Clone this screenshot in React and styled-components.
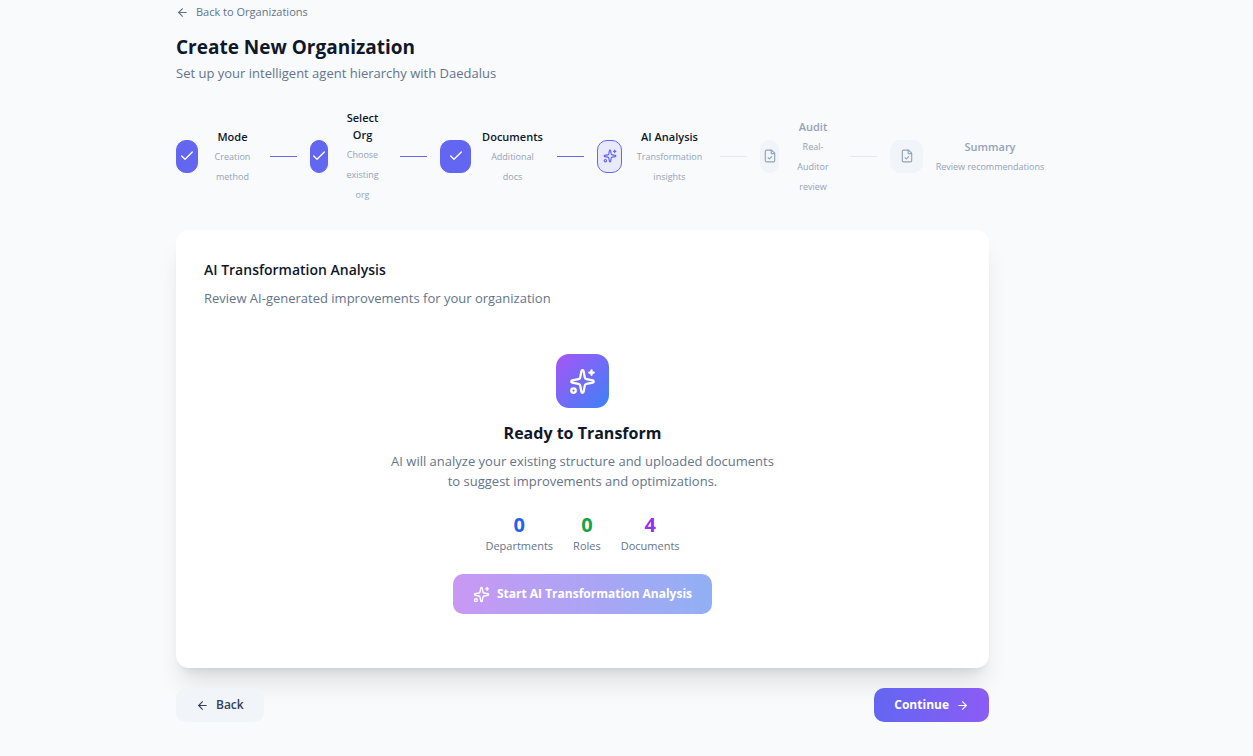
import styled, { createGlobalStyle } from "styled-components";
import { ArrowLeft, ArrowRight, Check, FileCheck, Sparkles } from "lucide-react";

const steps = [
  { title: "Mode", text: "Creation method", status: "done", badge: 22, label: 49 },
  { title: "Select Org", text: "Choose existing org", status: "done", badge: 18, label: 49 },
  { title: "Documents", text: "Additional docs", status: "done", badge: 31, label: 63 },
  { title: "AI Analysis", text: "Transformation insights", status: "current", badge: 25, label: 75 },
  { title: "Audit", text: "Real-Auditor review", status: "next", badge: 19, label: 48 },
  { title: "Summary", text: "Review recommendations", status: "next", badge: 33, label: 114 },
];

const stats = [
  { value: 0, label: "Departments", color: "#2563eb" },
  { value: 0, label: "Roles", color: "#16a34a" },
  { value: 4, label: "Documents", color: "#9333ea" },
];

function StepIcon({ status }) {
  if (status === "done") return <Check size={16} />;
  if (status === "current") return <Sparkles size={14} />;
  return <FileCheck size={14} />;
}

export default function App() {
  return (
    <Page>
      <GlobalStyle />
      <Content>
        <BackLink href="#organizations">
          <ArrowLeft size={13} />
          Back to Organizations
        </BackLink>
        <Title>Create New Organization</Title>
        <Subtitle>Set up your intelligent agent hierarchy with Daedalus</Subtitle>

        <Steps>
          {steps.map((s) => (
            <Step key={s.title} $done={s.status === "done"}>
              <Badge $status={s.status} $width={s.badge}>
                <StepIcon status={s.status} />
              </Badge>
              <StepLabel $width={s.label}>
                <StepTitle $muted={s.status === "next"}>{s.title}</StepTitle>
                <StepText>{s.text}</StepText>
              </StepLabel>
            </Step>
          ))}
        </Steps>

        <Card>
          <CardTitle>AI Transformation Analysis</CardTitle>
          <CardText>Review AI-generated improvements for your organization</CardText>
          <Hero>
            <HeroIcon>
              <Sparkles size={27} />
            </HeroIcon>
            <HeroTitle>Ready to Transform</HeroTitle>
            <HeroText>
              AI will analyze your existing structure and uploaded documents to suggest
              improvements and optimizations.
            </HeroText>
            <Stats>
              {stats.map((s) => (
                <div key={s.label}>
                  <StatValue $color={s.color}>{s.value}</StatValue>
                  <StatLabel>{s.label}</StatLabel>
                </div>
              ))}
            </Stats>
            <StartButton type="button" disabled>
              <Sparkles size={17} />
              Start AI Transformation Analysis
            </StartButton>
          </Hero>
        </Card>

        <Footer>
          <BackButton type="button">
            <ArrowLeft size={13} />
            Back
          </BackButton>
          <ContinueButton type="button">
            Continue
            <ArrowRight size={13} />
          </ContinueButton>
        </Footer>
      </Content>
    </Page>
  );
}

const GlobalStyle = createGlobalStyle`
  * {
    box-sizing: border-box;
  }
  body {
    margin: 0;
    background: #f8fafc;
    color: #0f172a;
    font-family: "Segoe UI", "Open Sans", sans-serif;
    font-size: 13px;
    line-height: 20px;
  }
  h1, h2, h3, p, ol {
    margin: 0;
    padding: 0;
  }
  svg {
    flex-shrink: 0;
  }
`;

const Page = styled.div`
  min-height: 100vh;
  padding: 2px 88px 34px 0;
  overflow-x: hidden;
`;

const Content = styled.main`
  max-width: 813px;
  margin: 0 auto;
`;

const BackLink = styled.a`
  display: inline-flex;
  align-items: center;
  gap: 7px;
  vertical-align: top;
  color: #64748b;
  font-size: 11px;
  text-decoration: none;
`;

const Title = styled.h1`
  margin-top: 12px;
  font-size: 19px;
  font-weight: 700;
  line-height: 26px;
`;

const Subtitle = styled.p`
  margin-top: 3px;
  color: #64748b;
`;

const Steps = styled.ol`
  display: flex;
  align-items: center;
  height: 96px;
  margin-top: 25px;
  list-style: none;
`;

const Step = styled.li`
  display: flex;
  align-items: center;
  flex-shrink: 0;

  &:not(:last-child)::after {
    content: "";
    width: 27px;
    height: 1px;
    margin: 0 13px;
    background: ${(p) => (p.$done ? "#6366f1" : "#e2e8f0")};
  }
`;

const badgeColors = {
  done: "background: #6366f1; border-color: #6366f1; color: #ffffff;",
  current: "background: #e9e9fc; border-color: #6366f1; color: #6366f1;",
  next: "background: #f1f5f9; border-color: #f1f5f9; color: #94a3b8;",
};

const Badge = styled.div`
  display: flex;
  align-items: center;
  justify-content: center;
  width: ${(p) => p.$width}px;
  height: 33px;
  border: 1px solid;
  border-radius: 10px;
  ${(p) => badgeColors[p.$status]}
`;

const StepLabel = styled.div`
  width: ${(p) => p.$width}px;
  margin-left: 10px;
  padding: 2px 1px 0;
  text-align: center;
`;

const StepTitle = styled.div`
  color: ${(p) => (p.$muted ? "#94a3b8" : "#0f172a")};
  font-size: 11px;
  font-weight: 600;
  line-height: 17px;
`;

const StepText = styled.div`
  margin-top: 2px;
  color: #94a3b8;
  font-size: 9px;
`;

const Card = styled.section`
  margin-top: 26px;
  padding: 28px 28px 54px;
  border-radius: 13px;
  background: #ffffff;
  box-shadow: 0 20px 25px -5px rgba(0, 0, 0, 0.1), 0 8px 10px -6px rgba(0, 0, 0, 0.1);
`;

const CardTitle = styled.h2`
  font-size: 14px;
  font-weight: 600;
  line-height: 24px;
`;

const CardText = styled.p`
  margin-top: 6px;
  color: #64748b;
`;

const Hero = styled.div`
  display: flex;
  flex-direction: column;
  align-items: center;
  margin-top: 46px;
`;

const HeroIcon = styled.div`
  display: flex;
  align-items: center;
  justify-content: center;
  width: 53px;
  height: 54px;
  border-radius: 13px;
  background: linear-gradient(to bottom right, #a855f7, #3b82f6);
  color: #ffffff;
`;

const HeroTitle = styled.h3`
  margin-top: 12px;
  font-size: 16px;
  font-weight: 700;
  line-height: 26px;
`;

const HeroText = styled.p`
  max-width: 390px;
  margin-top: 5px;
  color: #64748b;
  text-align: center;
`;

const Stats = styled.div`
  display: flex;
  gap: 20px;
  margin-top: 20px;
  text-align: center;
`;

const StatValue = styled.div`
  color: ${(p) => p.$color};
  font-size: 20px;
  font-weight: 700;
  line-height: 28px;
`;

const StatLabel = styled.div`
  color: #64748b;
  font-size: 11px;
  line-height: 14px;
`;

const Button = styled.button`
  display: inline-flex;
  align-items: center;
  justify-content: center;
  gap: 7px;
  height: 34px;
  padding: 0 20px;
  border: none;
  border-radius: 10px;
  font-family: inherit;
  font-size: 12px;
  font-weight: 700;
  line-height: 20px;
`;

const StartButton = styled(Button)`
  height: 40px;
  margin-top: 21px;
  background: linear-gradient(to right, #9333ea, #2563eb);
  color: #ffffff;
  opacity: 0.5;
`;

const Footer = styled.div`
  display: flex;
  justify-content: space-between;
  margin-top: 20px;
`;

const BackButton = styled(Button)`
  background: #f1f5f9;
  color: #334155;
  font-weight: 600;
`;

const ContinueButton = styled(Button)`
  background: linear-gradient(to right, #6366f1, #8b5cf6);
  color: #ffffff;
`;
